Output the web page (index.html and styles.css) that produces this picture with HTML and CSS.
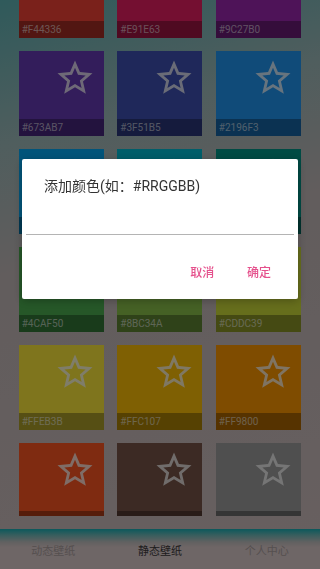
FILE: index.html
```html
<!DOCTYPE html>
<html lang="zh">
<head>
<meta charset="utf-8">
<title>静态壁纸</title>
<link rel="stylesheet" href="styles.css">
</head>
<body>
<div class="app">
  <main class="content">
    <div class="grid">
      <div class="tile" style="background:#F44336"><svg class="star" viewBox="0 0 24 24"><path d="M22 9.24l-7.19-.62L12 2 9.19 8.63 2 9.24l5.46 4.73L5.82 21 12 17.27 18.18 21l-1.63-7.03L22 9.24zM12 15.4l-3.76 2.27 1-4.28-3.32-2.88 4.38-.38L12 6.1l1.71 4.04 4.38.38-3.32 2.88 1 4.28L12 15.4z"/></svg><div class="band">#F44336</div></div>
      <div class="tile" style="background:#E91E63"><svg class="star" viewBox="0 0 24 24"><path d="M22 9.24l-7.19-.62L12 2 9.19 8.63 2 9.24l5.46 4.73L5.82 21 12 17.27 18.18 21l-1.63-7.03L22 9.24zM12 15.4l-3.76 2.27 1-4.28-3.32-2.88 4.38-.38L12 6.1l1.71 4.04 4.38.38-3.32 2.88 1 4.28L12 15.4z"/></svg><div class="band">#E91E63</div></div>
      <div class="tile" style="background:#9C27B0"><svg class="star" viewBox="0 0 24 24"><path d="M22 9.24l-7.19-.62L12 2 9.19 8.63 2 9.24l5.46 4.73L5.82 21 12 17.27 18.18 21l-1.63-7.03L22 9.24zM12 15.4l-3.76 2.27 1-4.28-3.32-2.88 4.38-.38L12 6.1l1.71 4.04 4.38.38-3.32 2.88 1 4.28L12 15.4z"/></svg><div class="band">#9C27B0</div></div>

      <div class="tile" style="background:#673AB7"><svg class="star" viewBox="0 0 24 24"><path d="M22 9.24l-7.19-.62L12 2 9.19 8.63 2 9.24l5.46 4.73L5.82 21 12 17.27 18.18 21l-1.63-7.03L22 9.24zM12 15.4l-3.76 2.27 1-4.28-3.32-2.88 4.38-.38L12 6.1l1.71 4.04 4.38.38-3.32 2.88 1 4.28L12 15.4z"/></svg><div class="band">#673AB7</div></div>
      <div class="tile" style="background:#3F51B5"><svg class="star" viewBox="0 0 24 24"><path d="M22 9.24l-7.19-.62L12 2 9.19 8.63 2 9.24l5.46 4.73L5.82 21 12 17.27 18.18 21l-1.63-7.03L22 9.24zM12 15.4l-3.76 2.27 1-4.28-3.32-2.88 4.38-.38L12 6.1l1.71 4.04 4.38.38-3.32 2.88 1 4.28L12 15.4z"/></svg><div class="band">#3F51B5</div></div>
      <div class="tile" style="background:#2196F3"><svg class="star" viewBox="0 0 24 24"><path d="M22 9.24l-7.19-.62L12 2 9.19 8.63 2 9.24l5.46 4.73L5.82 21 12 17.27 18.18 21l-1.63-7.03L22 9.24zM12 15.4l-3.76 2.27 1-4.28-3.32-2.88 4.38-.38L12 6.1l1.71 4.04 4.38.38-3.32 2.88 1 4.28L12 15.4z"/></svg><div class="band">#2196F3</div></div>

      <div class="tile" style="background:#03A9F4"><svg class="star" viewBox="0 0 24 24"><path d="M22 9.24l-7.19-.62L12 2 9.19 8.63 2 9.24l5.46 4.73L5.82 21 12 17.27 18.18 21l-1.63-7.03L22 9.24zM12 15.4l-3.76 2.27 1-4.28-3.32-2.88 4.38-.38L12 6.1l1.71 4.04 4.38.38-3.32 2.88 1 4.28L12 15.4z"/></svg><div class="band">#03A9F4</div></div>
      <div class="tile" style="background:#00BCD4"><svg class="star" viewBox="0 0 24 24"><path d="M22 9.24l-7.19-.62L12 2 9.19 8.63 2 9.24l5.46 4.73L5.82 21 12 17.27 18.18 21l-1.63-7.03L22 9.24zM12 15.4l-3.76 2.27 1-4.28-3.32-2.88 4.38-.38L12 6.1l1.71 4.04 4.38.38-3.32 2.88 1 4.28L12 15.4z"/></svg><div class="band">#00BCD4</div></div>
      <div class="tile" style="background:#009688"><svg class="star" viewBox="0 0 24 24"><path d="M22 9.24l-7.19-.62L12 2 9.19 8.63 2 9.24l5.46 4.73L5.82 21 12 17.27 18.18 21l-1.63-7.03L22 9.24zM12 15.4l-3.76 2.27 1-4.28-3.32-2.88 4.38-.38L12 6.1l1.71 4.04 4.38.38-3.32 2.88 1 4.28L12 15.4z"/></svg><div class="band">#009688</div></div>

      <div class="tile" style="background:#4CAF50"><svg class="star" viewBox="0 0 24 24"><path d="M22 9.24l-7.19-.62L12 2 9.19 8.63 2 9.24l5.46 4.73L5.82 21 12 17.27 18.18 21l-1.63-7.03L22 9.24zM12 15.4l-3.76 2.27 1-4.28-3.32-2.88 4.38-.38L12 6.1l1.71 4.04 4.38.38-3.32 2.88 1 4.28L12 15.4z"/></svg><div class="band">#4CAF50</div></div>
      <div class="tile" style="background:#8BC34A"><svg class="star" viewBox="0 0 24 24"><path d="M22 9.24l-7.19-.62L12 2 9.19 8.63 2 9.24l5.46 4.73L5.82 21 12 17.27 18.18 21l-1.63-7.03L22 9.24zM12 15.4l-3.76 2.27 1-4.28-3.32-2.88 4.38-.38L12 6.1l1.71 4.04 4.38.38-3.32 2.88 1 4.28L12 15.4z"/></svg><div class="band">#8BC34A</div></div>
      <div class="tile" style="background:#CDDC39"><svg class="star" viewBox="0 0 24 24"><path d="M22 9.24l-7.19-.62L12 2 9.19 8.63 2 9.24l5.46 4.73L5.82 21 12 17.27 18.18 21l-1.63-7.03L22 9.24zM12 15.4l-3.76 2.27 1-4.28-3.32-2.88 4.38-.38L12 6.1l1.71 4.04 4.38.38-3.32 2.88 1 4.28L12 15.4z"/></svg><div class="band">#CDDC39</div></div>

      <div class="tile" style="background:#FFEB3B"><svg class="star" viewBox="0 0 24 24"><path d="M22 9.24l-7.19-.62L12 2 9.19 8.63 2 9.24l5.46 4.73L5.82 21 12 17.27 18.18 21l-1.63-7.03L22 9.24zM12 15.4l-3.76 2.27 1-4.28-3.32-2.88 4.38-.38L12 6.1l1.71 4.04 4.38.38-3.32 2.88 1 4.28L12 15.4z"/></svg><div class="band">#FFEB3B</div></div>
      <div class="tile" style="background:#FFC107"><svg class="star" viewBox="0 0 24 24"><path d="M22 9.24l-7.19-.62L12 2 9.19 8.63 2 9.24l5.46 4.73L5.82 21 12 17.27 18.18 21l-1.63-7.03L22 9.24zM12 15.4l-3.76 2.27 1-4.28-3.32-2.88 4.38-.38L12 6.1l1.71 4.04 4.38.38-3.32 2.88 1 4.28L12 15.4z"/></svg><div class="band">#FFC107</div></div>
      <div class="tile" style="background:#FF9800"><svg class="star" viewBox="0 0 24 24"><path d="M22 9.24l-7.19-.62L12 2 9.19 8.63 2 9.24l5.46 4.73L5.82 21 12 17.27 18.18 21l-1.63-7.03L22 9.24zM12 15.4l-3.76 2.27 1-4.28-3.32-2.88 4.38-.38L12 6.1l1.71 4.04 4.38.38-3.32 2.88 1 4.28L12 15.4z"/></svg><div class="band">#FF9800</div></div>

      <div class="tile" style="background:#FF5722"><svg class="star" viewBox="0 0 24 24"><path d="M22 9.24l-7.19-.62L12 2 9.19 8.63 2 9.24l5.46 4.73L5.82 21 12 17.27 18.18 21l-1.63-7.03L22 9.24zM12 15.4l-3.76 2.27 1-4.28-3.32-2.88 4.38-.38L12 6.1l1.71 4.04 4.38.38-3.32 2.88 1 4.28L12 15.4z"/></svg><div class="band"></div></div>
      <div class="tile" style="background:#795548"><svg class="star" viewBox="0 0 24 24"><path d="M22 9.24l-7.19-.62L12 2 9.19 8.63 2 9.24l5.46 4.73L5.82 21 12 17.27 18.18 21l-1.63-7.03L22 9.24zM12 15.4l-3.76 2.27 1-4.28-3.32-2.88 4.38-.38L12 6.1l1.71 4.04 4.38.38-3.32 2.88 1 4.28L12 15.4z"/></svg><div class="band"></div></div>
      <div class="tile" style="background:#9E9E9E"><svg class="star" viewBox="0 0 24 24"><path d="M22 9.24l-7.19-.62L12 2 9.19 8.63 2 9.24l5.46 4.73L5.82 21 12 17.27 18.18 21l-1.63-7.03L22 9.24zM12 15.4l-3.76 2.27 1-4.28-3.32-2.88 4.38-.38L12 6.1l1.71 4.04 4.38.38-3.32 2.88 1 4.28L12 15.4z"/></svg><div class="band"></div></div>
    </div>
  </main>
  <div class="gap"></div>
  <nav class="tabbar">
    <div class="tab">动态壁纸</div>
    <div class="tab active">静态壁纸</div>
    <div class="tab">个人中心</div>
  </nav>
</div>

<div class="overlay">
  <div class="dialog">
    <div class="dialog-title">添加颜色(如：#RRGGBB)</div>
    <div class="dialog-input"></div>
    <div class="dialog-actions">
      <span class="btn">取消</span>
      <span class="btn">确定</span>
    </div>
  </div>
</div>
</body>
</html>
```
FILE: styles.css
```css
* { box-sizing: border-box; }
html, body { margin: 0; padding: 0; }
body {
  width: 320px;
  height: 569px;
  overflow: hidden;
  font-family: Roboto, "Noto Sans CJK SC", sans-serif;
  background: linear-gradient(165deg, #5fb4b6 0%, #9fbcbc 22%, #c4baba 42%, #d0c0c0 100%);
}
.app {
  display: flex;
  flex-direction: column;
  height: 569px;
}
.content {
  height: 516px;
  overflow: hidden;
  flex: none;
}
.grid {
  margin-top: -47px;
  display: grid;
  grid-template-columns: repeat(3, 1fr);
  column-gap: 13.3px;
  row-gap: 13px;
  padding: 0 19px 0 18.7px;
}
.tile {
  height: 85px;
  display: flex;
  flex-direction: column;
  padding-top: 6px;
}
.star {
  width: 42px;
  height: 42px;
  align-self: flex-end;
  margin-right: 7.5px;
  fill: rgba(255, 255, 255, 0.78);
}
.band {
  margin-top: auto;
  height: 17px;
  line-height: 17px;
  padding-left: 3px;
  font-size: 10px;
  color: rgba(255, 255, 255, 0.6);
  background: rgba(0, 0, 0, 0.32);
}
.gap { height: 13px; flex: none; }
.tabbar {
  flex: none;
  height: 40px;
  display: grid;
  grid-template-columns: repeat(3, 1fr);
  align-items: center;
  background: linear-gradient(to bottom, #18b2b8 0px, #6fbcbc 6px, #c2c2c2 13px, #dccccc 18px, #ddcccc 100%);
}
.tab {
  text-align: center;
  font-family: "Noto Sans CJK SC", sans-serif;
  font-size: 11px;
  line-height: 16px;
  padding-top: 2px;
  color: #ab9f9f;
}
.tab.active { color: #3c3a3c; }

.overlay {
  position: fixed;
  inset: 0;
  background: rgba(0, 0, 0, 0.5);
  display: flex;
  flex-direction: column;
  padding: 159px 22px 0;
}
.dialog {
  background: #fff;
  border-radius: 2px;
  height: 140px;
  display: flex;
  flex-direction: column;
  box-shadow: 0 2px 8px rgba(0, 0, 0, 0.25);
}
.dialog-title {
  padding: 17px 22px 0;
  font-size: 14px;
  line-height: 20px;
  color: #333;
}
.dialog-input {
  margin: 0 4px;
  height: 39px;
  border-bottom: 1.5px solid #b4b4b4;
}
.dialog-actions {
  display: flex;
  justify-content: flex-end;
  gap: 32.7px;
  padding: 29px 27px 0 0;
}
.btn {
  font-family: "Noto Sans CJK SC", sans-serif;
  font-size: 12px;
  line-height: 16px;
  font-weight: 500;
  color: #e5508c;
}
```
